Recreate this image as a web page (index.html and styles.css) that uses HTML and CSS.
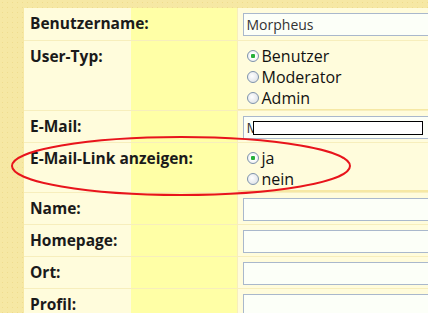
FILE: index.html
```html
<!DOCTYPE html>
<html lang="de">
<head>
    <meta charset="UTF-8" />
    <title>Profil bearbeiten</title>
    <link rel="stylesheet" href="styles.css">
</head>
<body>
    <div class="seite">
        <table class="profil">
            <tr class="zeile">
                <th>Benutzername:</th>
                <td><input type="text" class="feld" value="Morpheus" /></td>
            </tr>
            <tr class="zeile hoch">
                <th>User-Typ:</th>
                <td class="auswahl">
                    <label><input type="radio" name="typ" checked />Benutzer</label>
                    <label><input type="radio" name="typ" />Moderator</label>
                    <label><input type="radio" name="typ" />Admin</label>
                </td>
            </tr>
            <tr class="zeile">
                <th>E-Mail:</th>
                <td class="email">
                    <input type="text" class="feld" value="M" />
                    <!-- geschwärzte Adresse -->
                    <span class="balken"></span>
                </td>
            </tr>
            <tr class="zeile mittel">
                <th>E-Mail-Link anzeigen:</th>
                <td class="auswahl">
                    <label><input type="radio" name="link" checked />ja</label>
                    <label><input type="radio" name="link" />nein</label>
                </td>
            </tr>
            <tr class="zeile">
                <th>Name:</th>
                <td><input type="text" class="feld" /></td>
            </tr>
            <tr class="zeile">
                <th>Homepage:</th>
                <td><input type="text" class="feld" /></td>
            </tr>
            <tr class="zeile">
                <th>Ort:</th>
                <td><input type="text" class="feld" /></td>
            </tr>
            <tr class="zeile">
                <th>Profil:</th>
                <td><textarea class="feld text"></textarea></td>
            </tr>
        </table>

        <!-- rote Markierung -->
        <svg class="kreis" width="428" height="313" viewBox="0 0 428 313">
            <ellipse cx="181" cy="166" rx="169" ry="29" fill="none" stroke="#e8141c" stroke-width="2" />
        </svg>
    </div>
</body>
</html>
```

FILE: styles.css
```css
* {
    margin: 0;
    padding: 0;
    box-sizing: border-box;
}

body {
    background-color: #f6e8a4;
    background-image: radial-gradient(#efdc8e 0.6px, transparent 0.9px);
    background-size: 5px 5px;
    font-family: 'Open Sans', sans-serif;
    color: #1a1a1a;
    overflow: hidden;
}

.seite {
    position: relative;
    width: 428px;
    height: 313px;
    overflow: hidden;
    padding: 8px 0 0 24px;
}

.profil {
    border-collapse: collapse;
    width: 520px;
}

.zeile {
    height: 32px;
    border-bottom: 1px solid #f7eebc;
}

.hoch {
    height: 70px;
}

.mittel {
    height: 50px;
}

.profil th {
    width: 213px;
    text-align: left;
    vertical-align: top;
    padding: 6px 0 0 6px;
    font-size: 15.5px;
    font-weight: 700;
    line-height: 18px;
    background: linear-gradient(to right, #fffcdc 0, #fffcdc 107px, #ffffa6 107px);
    border-right: 1px solid #f7eebc;
}

.profil td {
    vertical-align: top;
    padding: 5px 0 0 5px;
    background-color: #fffcdc;
}

.feld {
    display: block;
    width: 300px;
    height: 23px;
    padding: 0 3px;
    border: 1px solid #a9b8cc;
    background-color: #fcfff8;
    font-family: 'Open Sans', sans-serif;
    font-size: 14px;
    color: #333;
}

.text {
    height: 40px;
    resize: none;
}

.auswahl {
    display: flex;
    flex-direction: column;
}

.auswahl label {
    display: flex;
    align-items: center;
    height: 21px;
    font-size: 16px;
    color: #111;
}

.auswahl input {
    appearance: none;
    width: 12px;
    height: 12px;
    margin: 0 3px 0 4px;
    border: 1px solid #7f93ab;
    border-radius: 50%;
    background: radial-gradient(circle at 40% 40%, #ffffff, #d6dbe2);
}

.auswahl input:checked {
    background: radial-gradient(circle, #27b03a 0, #27b03a 2px, #ffffff 2.5px, #dfe3e8);
}

.email {
    position: relative;
}

.balken {
    position: absolute;
    left: 15px;
    top: 10px;
    width: 170px;
    height: 14px;
    border: 1px solid #000;
    background-color: #fff;
}

.kreis {
    position: absolute;
    left: 0;
    top: 0;
    pointer-events: none;
}
```
